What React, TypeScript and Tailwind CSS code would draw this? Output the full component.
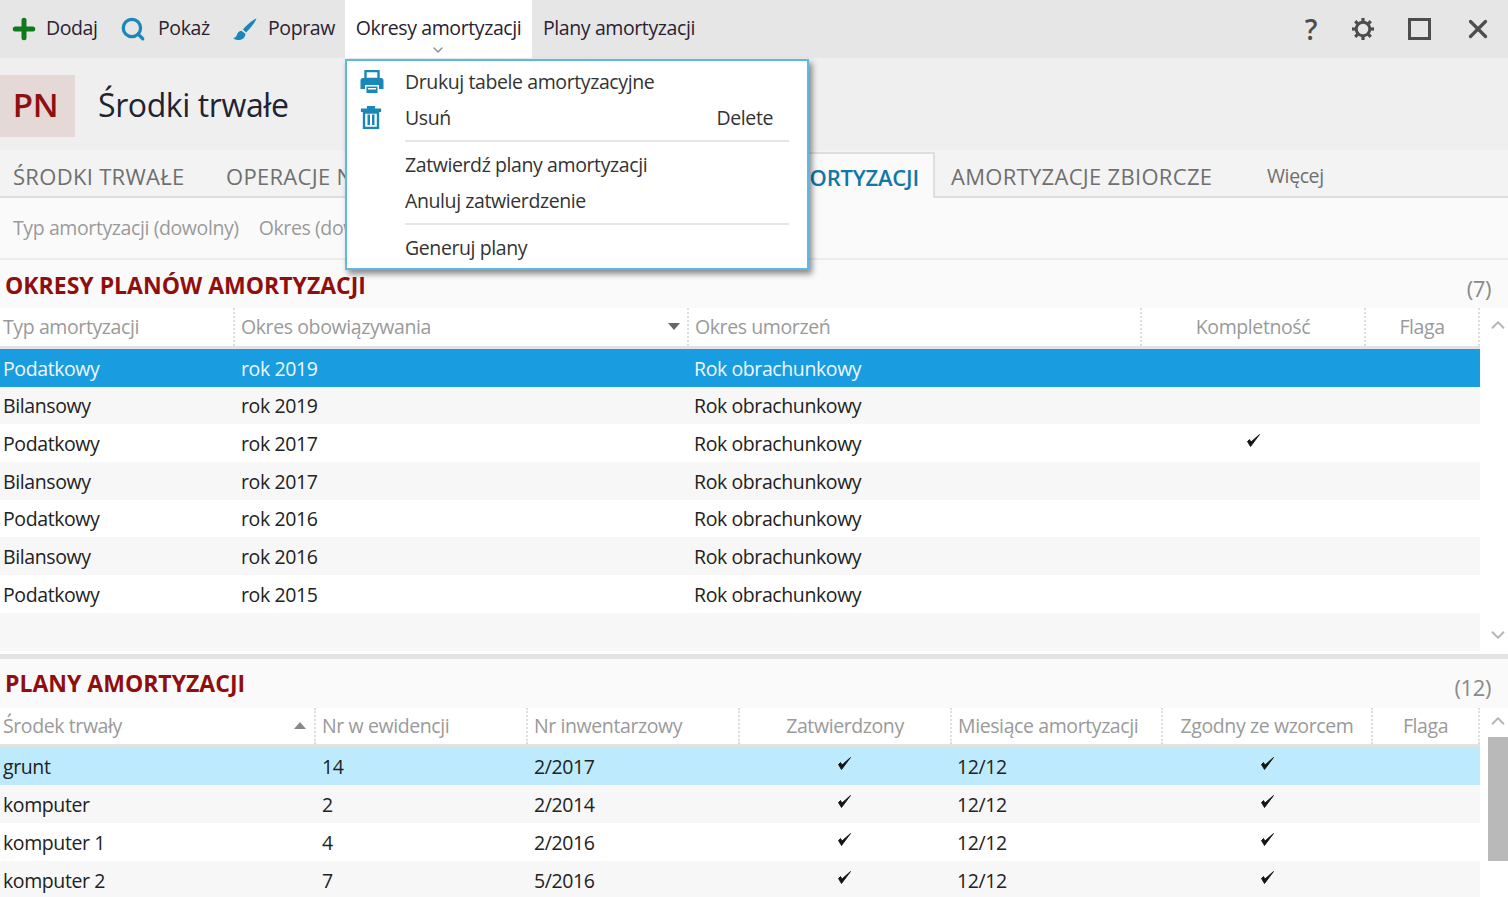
import { ChevronDown, ChevronUp, Plus, Search, X } from "lucide-react";

const periodRows = [
  ["Podatkowy", "rok 2019", "Rok obrachunkowy", false],
  ["Bilansowy", "rok 2019", "Rok obrachunkowy", false],
  ["Podatkowy", "rok 2017", "Rok obrachunkowy", true],
  ["Bilansowy", "rok 2017", "Rok obrachunkowy", false],
  ["Podatkowy", "rok 2016", "Rok obrachunkowy", false],
  ["Bilansowy", "rok 2016", "Rok obrachunkowy", false],
  ["Podatkowy", "rok 2015", "Rok obrachunkowy", false],
] as const;

const planRows = [
  ["grunt", "14", "2/2017", "12/12"],
  ["komputer", "2", "2/2014", "12/12"],
  ["komputer 1", "4", "2/2016", "12/12"],
  ["komputer 2", "7", "5/2016", "12/12"],
];

function Check({ className = "" }: { className?: string }) {
  return (
    <svg className={className} width="15" height="15" viewBox="0 0 15 15" aria-hidden="true">
      <path d="M1.500 8.500 4.500 13.500 13.500 1.500 5 9 3.500 6.500Z" fill="#141414" stroke="#141414" strokeWidth="0.900" strokeLinejoin="round" />
    </svg>
  );
}

function BrushIcon() {
  return (
    <svg width="25" height="25" viewBox="0 0 24 24" aria-hidden="true">
      <path d="M23.500 1.200C19 3.500 13.500 8 10.500 12l3 2.800C17.500 11 21.800 6 23.500 1.200Z" fill="#1b87b8" />
      <path d="M9 13.200c-2.600.3-3.800 2-4.300 4-.4 1.600-1.700 2.500-3.700 3 2.500 2.500 8.500 3 11-1 1-1.600 1-2.800.6-3.300Z" fill="#1b87b8" />
    </svg>
  );
}

function PrinterIcon() {
  return (
    <svg width="24" height="24" viewBox="0 0 24 24" aria-hidden="true">
      <path d="M5.500 1h13v8h-13Z" fill="none" stroke="#1b87b8" strokeWidth="2.400" />
      <path d="M3 8h18a2.500 2.500 0 0 1 2.500 2.500V19H19v-4H5v4H.5v-8.500A2.500 2.500 0 0 1 3 8Z" fill="#1b87b8" />
      <path d="M6.500 16.500h11V23h-11Z" fill="#1b87b8" />
      <path d="M8 18h8v1.500H8Z" fill="#fff" />
    </svg>
  );
}

function TrashIcon() {
  return (
    <svg width="22" height="24" viewBox="0 0 22 24" aria-hidden="true">
      <path d="M1.500 4h19v2.500h-19ZM7.500 4V1.500h7V4" fill="#1b87b8" stroke="#1b87b8" strokeWidth="1.200" />
      <path d="M4 7.500h14V23H4Z" fill="none" stroke="#1b87b8" strokeWidth="2.400" />
      <path d="M7.500 9.500h2.500V20H7.500ZM12 9.500h2.500V20H12Z" fill="#1b87b8" />
    </svg>
  );
}

function GearIcon() {
  const teeth = [0, 45, 90, 135, 180, 225, 270, 315];
  return (
    <svg width="24" height="24" viewBox="0 0 24 24" aria-hidden="true">
      <circle cx="12" cy="12" r="6.800" fill="none" stroke="#4d4d4d" strokeWidth="3" />
      {teeth.map((deg) => (
        <rect key={deg} x="10.400" y="1" width="3.200" height="4" fill="#4d4d4d" transform={`rotate(${deg} 12 12)`} />
      ))}
    </svg>
  );
}

function ToolButton({ icon, label, className }: { icon: React.ReactNode; label: string; className: string }) {
  return (
    <div className={`flex h-full items-center ${className}`}>
      {icon}
      <span className="pb-[2px]">{label}</span>
    </div>
  );
}

function MenuItem({ icon, label, hint }: { icon?: React.ReactNode; label: string; hint?: string }) {
  return (
    <div className="flex h-[35.500px] items-center">
      <div className="flex w-[58px] justify-start pl-[13px]">{icon}</div>
      <span>{label}</span>
      {hint && <span className="ml-auto pr-[34px]">{hint}</span>}
    </div>
  );
}

export default function App() {
  return (
    <div
      className="relative flex h-[897px] w-[1508px] flex-col overflow-hidden bg-white text-[19.500px] leading-none font-medium tracking-[-0.4px] text-[#222]"
      style={{ fontFamily: '"Open Sans", "Noto Sans", sans-serif' }}
    >
      {/* toolbar */}
      <div className="flex h-[58px] shrink-0 items-center bg-[#e6e6e6] text-[#2a2233]">
        <ToolButton className="w-[118px] gap-[7px] pl-[9px]" icon={<Plus size={30} strokeWidth={4} color="#0f7a1a" />} label="Dodaj" />
        <ToolButton className="w-[111px] gap-[12px] pl-[2px]" icon={<Search size={26} strokeWidth={3} color="#1b87b8" />} label="Pokaż" />
        <ToolButton className="w-[116px] gap-[11px] pl-[3px]" icon={<BrushIcon />} label="Popraw" />
        <div className="relative flex h-full w-[187px] items-center justify-center bg-white pb-[2px]">
          Okresy amortyzacji
          <ChevronDown size={16} color="#8a8a8a" className="absolute bottom-0 left-[85px]" />
        </div>
        <div className="pb-[2px] pl-[11px]">Plany amortyzacji</div>
        <div className="ml-auto flex items-center text-[#4d4d4d]">
          <span className="w-[38px] text-center text-[28px] font-semibold">?</span>
          <div className="ml-[21px] w-[24px]"><GearIcon /></div>
          <div className="ml-[33px] h-[22px] w-[23px] border-[3px] border-[#4d4d4d]" />
          <X size={30} strokeWidth={2.600} className="mr-[15px] ml-[32px]" />
        </div>
      </div>

      {/* title */}
      <div className="flex h-[92px] shrink-0 items-center bg-[#efefef] pt-[3px]">
        <div className="flex h-[62px] w-[75px] items-center justify-center bg-[#e4d9d7] pr-[4px] pb-[2px] text-[33px] font-semibold tracking-[-0.2px] text-[#8f1010]">PN</div>
        <div className="ml-[23px] pb-[2px] text-[32px] tracking-[-0.4px] text-[#1f2430]">Środki trwałe</div>
      </div>

      {/* tabs */}
      <div className="flex h-[48px] shrink-0 items-center border-b-2 border-[#dedede] bg-[#f3f3f3] pt-[6px] text-[22px] tracking-[0.3px] text-[#6f6f6f]">
        <span className="ml-[13px] w-[213px]">ŚRODKI TRWAŁE</span>
        <span className="w-[480px]">OPERACJE NA ŚRODKACH</span>
        <div className="-mb-[2px] flex h-[46px] w-[229px] items-center justify-end self-end border-x-2 border-t-2 border-[#dedede] bg-[#fafafa] pt-[2px] pr-[14px] font-semibold tracking-[-0.2px] whitespace-nowrap text-[#0f78a8]">
          PLANY AMORTYZACJI
        </div>
        <span className="ml-[16px] w-[316px]">AMORTYZACJE ZBIORCZE</span>
        <span className="text-[19.500px] tracking-[-0.4px]">Więcej</span>
      </div>

      {/* filters */}
      <div className="flex h-[62px] shrink-0 items-center gap-[20px] border-b-2 border-[#ececec] bg-[#fafafa] pl-[13px] text-[#9a9a9a]">
        <span>Typ amortyzacji (dowolny)</span>
        <span>Okres (dowolny)</span>
      </div>

      {/* periods section */}
      <div className="flex h-[48px] shrink-0 items-center justify-between bg-[#fafafa] px-[5px] pr-[17px]">
        <span className="pt-[2px] text-[23px] font-bold tracking-normal text-[#8f0f0f]">OKRESY PLANÓW AMORTYZACJI</span>
        <span className="pt-[8px] text-[22px] text-[#8a8a8a]">(7)</span>
      </div>
      <div className="flex h-[346px] shrink-0">
        <div className="w-[1480px]">
          <div className="grid h-[41px] grid-cols-[233px_454px_453px_226px_114px] items-center border-b-[3px] border-[#e2e2e2] text-[#9a9a9a]">
            <span className="pl-[3px]">Typ amortyzacji</span>
            <div className="relative flex h-full items-center border-l-2 border-dotted border-[#dddddd] pl-[6px]">
              Okres obowiązywania
              <span className="absolute right-[7px] top-[15px] border-x-[6px] border-t-[7px] border-x-transparent border-t-[#666]" />
            </div>
            <span className="flex h-full items-center border-l-2 border-dotted border-[#dddddd] pl-[6px]">Okres umorzeń</span>
            <span className="flex h-full items-center justify-center border-x-2 border-dotted border-[#dddddd]">Kompletność</span>
            <span className="flex h-full items-center justify-center border-r-2 border-dotted border-[#dddddd]">Flaga</span>
          </div>
          {periodRows.map(([type, period, unit, complete], i) => (
            <div
              key={i}
              className={`grid h-[37.700px] grid-cols-[233px_454px_453px_226px_114px] items-center pt-[1px] ${
                i === 0 ? "bg-[#1a9de0] text-[#eef8ff]" : i % 2 === 1 ? "bg-[#f7f7f7]" : "bg-white"
              }`}
            >
              <span className="pl-[3px]">{type}</span>
              <span className="pl-[8px]">{period}</span>
              <span className="pl-[7px]">{unit}</span>
              <span className="flex justify-center">{complete && <Check className="-mt-[6px]" />}</span>
              <span />
            </div>
          ))}
          <div className="h-[37.700px] bg-[#f7f7f7]" />
        </div>
        <div className="flex w-[28px] flex-col items-center justify-between bg-white pt-[6px] pb-[8px] pl-[8px]">
          <ChevronUp size={22} color="#b5b5b5" />
          <ChevronDown size={22} color="#b5b5b5" />
        </div>
      </div>

      {/* splitter */}
      <div className="h-[5px] shrink-0 bg-[#e3e3e3]" />

      {/* plans section */}
      <div className="flex h-[49px] shrink-0 items-center justify-between bg-[#fafafa] px-[5px] pr-[17px]">
        <span className="text-[23px] font-bold tracking-normal text-[#8f0f0f]">PLANY AMORTYZACJI</span>
        <span className="pt-[6px] text-[22px] text-[#8a8a8a]">(12)</span>
      </div>
      <div className="flex min-h-0 flex-1">
        <div className="w-[1480px]">
          <div className="grid h-[39px] grid-cols-[314px_212px_212px_212px_211px_212px_107px] items-center border-b-[3px] border-[#e2e2e2] text-[#9a9a9a]">
            <div className="relative flex h-full items-center pl-[3px]">
              Środek trwały
              <span className="absolute right-[8px] top-[14px] border-x-[6px] border-b-[7px] border-x-transparent border-b-[#888]" />
            </div>
            <span className="flex h-full items-center border-l-2 border-dotted border-[#dddddd] pl-[6px]">Nr w ewidencji</span>
            <span className="flex h-full items-center border-l-2 border-dotted border-[#dddddd] pl-[6px]">Nr inwentarzowy</span>
            <span className="flex h-full items-center justify-center border-l-2 border-dotted border-[#dddddd]">Zatwierdzony</span>
            <span className="flex h-full items-center border-l-2 border-dotted border-[#dddddd] pl-[6px]">Miesiące amortyzacji</span>
            <span className="flex h-full items-center justify-center border-x-2 border-dotted border-[#dddddd]">Zgodny ze wzorcem</span>
            <span className="flex h-full items-center justify-center border-r-2 border-dotted border-[#dddddd]">Flaga</span>
          </div>
          {planRows.map(([name, nr, inv, months], i) => (
            <div
              key={name}
              className={`grid h-[38px] grid-cols-[314px_212px_212px_212px_211px_212px_107px] items-center pt-[1px] ${
                i === 0 ? "bg-[#bdeafd]" : i % 2 === 1 ? "bg-[#f7f7f7]" : "bg-white"
              }`}
            >
              <span className="pl-[3px]">{name}</span>
              <span className="pl-[8px]">{nr}</span>
              <span className="pl-[8px]">{inv}</span>
              <span className="flex justify-center"><Check className="-mt-[6px]" /></span>
              <span className="pl-[7px]">{months}</span>
              <span className="flex justify-center"><Check className="-mt-[6px]" /></span>
              <span />
            </div>
          ))}
        </div>
        <div className="flex w-[28px] flex-col items-center pt-[2px] pl-[8px]">
          <ChevronUp size={22} color="#b5b5b5" />
          <div className="mt-[5px] h-[124px] w-[20px] bg-[#b9b9b9]" />
        </div>
      </div>

      {/* dropdown */}
      <div className="absolute top-[59px] left-[345px] w-[464px] border-2 border-[#5cb8e6] bg-white pt-[3px] pb-[2px] text-[#333] shadow-[3px_4px_6px_rgba(0,0,0,0.45)]">
        <MenuItem icon={<PrinterIcon />} label="Drukuj tabele amortyzacyjne" />
        <MenuItem icon={<TrashIcon />} label="Usuń" hint="Delete" />
        <div className="my-[5px] mr-[18px] ml-[58px] h-[2px] bg-[#e6e6e6]" />
        <MenuItem label="Zatwierdź plany amortyzacji" />
        <MenuItem label="Anuluj zatwierdzenie" />
        <div className="my-[5px] mr-[18px] ml-[58px] h-[2px] bg-[#e6e6e6]" />
        <MenuItem label="Generuj plany" />
      </div>
    </div>
  );
}
